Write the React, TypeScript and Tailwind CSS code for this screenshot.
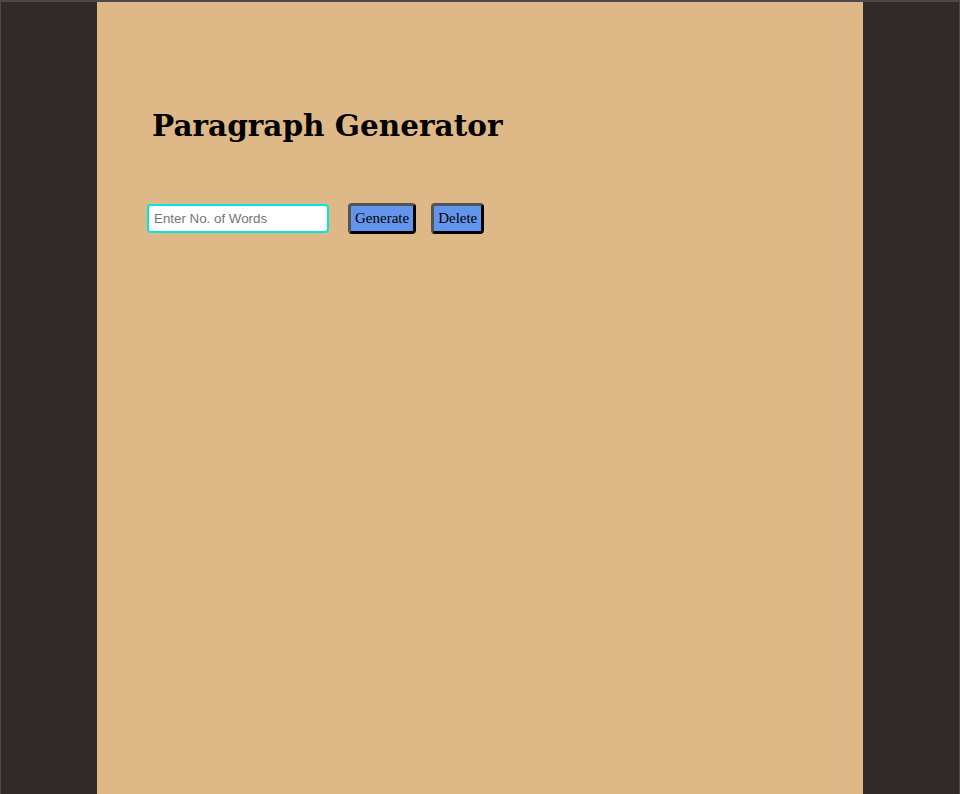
import React from "react";

export default function App() {
  return (
    <div className="flex h-[794px] w-[960px] flex-col overflow-hidden border-t-2 border-l border-r border-[#4b4b4d] bg-[#322a28]">
      <div className="mx-auto w-[766px] flex-1 bg-[#deb887] pl-[50px] pt-[100px]">
        <h1 className="ml-[5px] font-['DejaVu_Serif',serif] text-[29.5px] font-bold leading-[48px] text-black">
          Paragraph Generator
        </h1>
        <div className="mt-[53px] flex items-center">
          <input
            placeholder="Enter No. of Words"
            className="h-[29px] w-[182px] rounded-[4px] border-2 border-[#00e5e5] bg-white px-[5px] font-['Liberation_Sans',sans-serif] text-[13.33px] text-black outline-none placeholder:text-[#757575]"
          />
          <button className="ml-[19px] h-[31px] rounded-[4px] border-[3px] border-t-[#555] border-l-[#555] border-b-black border-r-black bg-[#6495ed] px-[4px] font-['Liberation_Serif',serif] text-[15px] text-black">
            Generate
          </button>
          <button className="ml-[15px] h-[31px] rounded-[4px] border-[3px] border-t-[#555] border-l-[#555] border-b-black border-r-black bg-[#6495ed] px-[4px] font-['Liberation_Serif',serif] text-[15px] text-black">
            Delete
          </button>
        </div>
      </div>
    </div>
  );
}
